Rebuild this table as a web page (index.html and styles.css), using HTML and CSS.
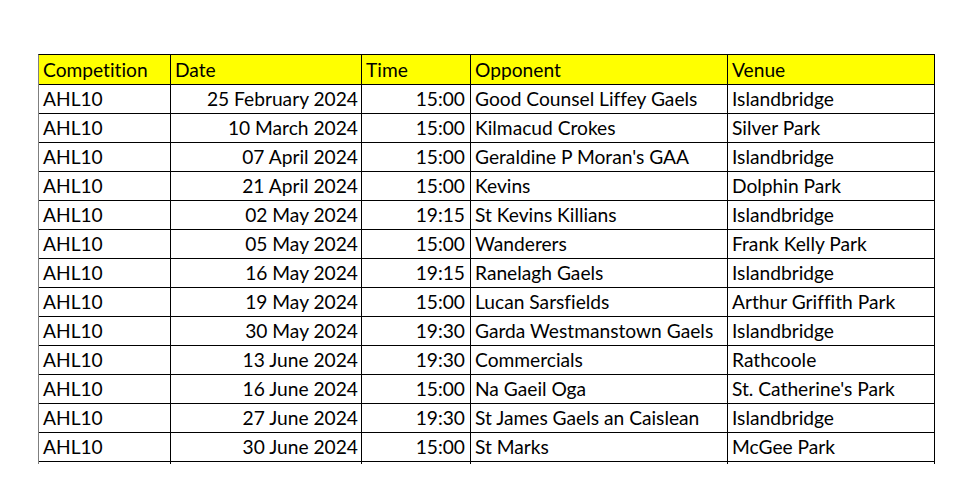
FILE: index.html
```html
<!DOCTYPE html>
<html>
<head>
<meta charset="utf-8">
<link rel="stylesheet" href="styles.css">
</head>
<body>
<div class="sheet">
  <div class="cell head">Competition</div>
  <div class="cell head">Date</div>
  <div class="cell head">Time</div>
  <div class="cell head">Opponent</div>
  <div class="cell head">Venue</div>

  <div class="cell">AHL10</div><div class="cell num">25 February 2024</div><div class="cell num time">15:00</div><div class="cell">Good Counsel Liffey Gaels</div><div class="cell">Islandbridge</div>
  <div class="cell">AHL10</div><div class="cell num">10 March 2024</div><div class="cell num time">15:00</div><div class="cell">Kilmacud Crokes</div><div class="cell">Silver Park</div>
  <div class="cell">AHL10</div><div class="cell num">07 April 2024</div><div class="cell num time">15:00</div><div class="cell">Geraldine P Moran's GAA</div><div class="cell">Islandbridge</div>
  <div class="cell">AHL10</div><div class="cell num">21 April 2024</div><div class="cell num time">15:00</div><div class="cell">Kevins</div><div class="cell">Dolphin Park</div>
  <div class="cell">AHL10</div><div class="cell num">02 May 2024</div><div class="cell num time">19:15</div><div class="cell">St Kevins Killians</div><div class="cell">Islandbridge</div>
  <div class="cell">AHL10</div><div class="cell num">05 May 2024</div><div class="cell num time">15:00</div><div class="cell">Wanderers</div><div class="cell">Frank Kelly Park</div>
  <div class="cell">AHL10</div><div class="cell num">16 May 2024</div><div class="cell num time">19:15</div><div class="cell">Ranelagh Gaels</div><div class="cell">Islandbridge</div>
  <div class="cell">AHL10</div><div class="cell num">19 May 2024</div><div class="cell num time">15:00</div><div class="cell">Lucan Sarsfields</div><div class="cell">Arthur Griffith Park</div>
  <div class="cell">AHL10</div><div class="cell num">30 May 2024</div><div class="cell num time">19:30</div><div class="cell">Garda Westmanstown Gaels</div><div class="cell">Islandbridge</div>
  <div class="cell">AHL10</div><div class="cell num">13 June 2024</div><div class="cell num time">19:30</div><div class="cell">Commercials</div><div class="cell">Rathcoole</div>
  <div class="cell">AHL10</div><div class="cell num">16 June 2024</div><div class="cell num time">15:00</div><div class="cell">Na Gaeil Oga</div><div class="cell">St. Catherine's Park</div>
  <div class="cell">AHL10</div><div class="cell num">27 June 2024</div><div class="cell num time">19:30</div><div class="cell">St James Gaels an Caislean</div><div class="cell">Islandbridge</div>
  <div class="cell">AHL10</div><div class="cell num">30 June 2024</div><div class="cell num time">15:00</div><div class="cell">St Marks</div><div class="cell">McGee Park</div>

  <div class="tail"></div><div class="tail"></div><div class="tail"></div><div class="tail"></div><div class="tail"></div>
</div>
</body>
</html>
```

FILE: styles.css
```css
html, body {
  margin: 0;
  padding: 0;
  background: #ffffff;
}

body {
  font-family: Lato, "Open Sans", sans-serif;
  font-size: 19.2px;
  color: #000000;
  font-variant-ligatures: none;
}

.sheet {
  display: grid;
  grid-template-columns: 132px 191px 109px 257px 207px;
  grid-template-rows: 30px repeat(13, 29px) 2px;
  margin: 54px 0 0 38px;
  border-top: 1px solid #000000;
  border-left: 1px solid #7f7f7f;
  width: max-content;
}

.cell {
  box-sizing: border-box;
  border-right: 1px solid #000000;
  border-bottom: 1px solid #000000;
  padding: 0 4px 0 4px;
  white-space: nowrap;
  overflow: hidden;
  display: flex;
  align-items: center;
  line-height: 1.2;
}

.head {
  background: #ffff00;
}

.num {
  justify-content: flex-end;
  padding-right: 3px;
}

.time {
  padding-right: 5px;
}

.tail {
  border-right: 1px solid #000000;
}
```
